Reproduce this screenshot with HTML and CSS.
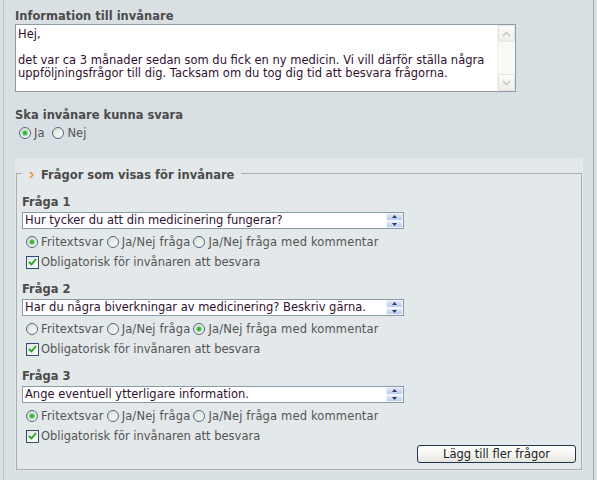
FILE: index.html
```html
<!DOCTYPE html>
<html lang="sv">
<head>
<meta charset="utf-8">
<title>Frågor</title>
<link rel="stylesheet" href="styles.css">
</head>
<body>
<div class="panel">
  <div class="field-title">Information till invånare</div>
  <div class="memo">
    <div class="memo-text">Hej,<br><br>det var ca 3 månader sedan som du fick en ny medicin. Vi vill därför ställa några<br>uppföljningsfrågor till dig. Tacksam om du tog dig tid att besvara frågorna.</div>
    <div class="vscroll">
      <span class="sbtn"><svg width="9" height="6" viewBox="0 0 9 6"><path d="M1 5 L4.5 1.5 L8 5" fill="none" stroke="#c3c6c8" stroke-width="1.4"/></svg></span>
      <span class="track"></span>
      <span class="sbtn"><svg width="9" height="6" viewBox="0 0 9 6"><path d="M1 1 L4.5 4.5 L8 1" fill="none" stroke="#c3c6c8" stroke-width="1.4"/></svg></span>
    </div>
  </div>

  <div class="field-title title-gap">Ska invånare kunna svara</div>
  <div class="choice-row answer-row">
    <span class="radio checked"></span><span class="lbl">Ja</span>
    <span class="radio"></span><span class="lbl">Nej</span>
  </div>

  <div class="group">
    <fieldset class="questions">
      <legend><svg class="chev" width="5" height="8" viewBox="0 0 5 8"><path d="M1 1 L4 4 L1 7" fill="none" stroke="#e8952c" stroke-width="1.5"/></svg>Frågor som visas för invånare</legend>

      <div class="question">
        <div class="q-title">Fråga 1</div>
        <div class="q-input">
          <span class="q-text">Hur tycker du att din medicinering fungerar?</span>
          <span class="spin"><span class="spin-btn"><svg width="5" height="3" viewBox="0 0 5 3"><path d="M0 3 L2.5 0 L5 3Z" fill="#2c3a55"/></svg></span><span class="spin-btn"><svg width="5" height="3" viewBox="0 0 5 3"><path d="M0 0 L2.5 3 L5 0Z" fill="#2c3a55"/></svg></span></span>
        </div>
        <div class="choice-row opts">
          <span class="radio checked"></span><span class="lbl">Fritextsvar</span>
          <span class="radio"></span><span class="lbl">Ja/Nej fråga</span>
          <span class="radio"></span><span class="lbl">Ja/Nej fråga med kommentar</span>
        </div>
        <div class="choice-row chk-row">
          <span class="check"><svg width="9" height="8" viewBox="0 0 9 8"><path d="M1 4 L3.5 6.5 L8 1" fill="none" stroke="#21a121" stroke-width="1.8"/></svg></span><span class="lbl">Obligatorisk för invånaren att besvara</span>
        </div>
      </div>

      <div class="question">
        <div class="q-title">Fråga 2</div>
        <div class="q-input">
          <span class="q-text">Har du några biverkningar av medicinering? Beskriv gärna.</span>
          <span class="spin"><span class="spin-btn"><svg width="5" height="3" viewBox="0 0 5 3"><path d="M0 3 L2.5 0 L5 3Z" fill="#2c3a55"/></svg></span><span class="spin-btn"><svg width="5" height="3" viewBox="0 0 5 3"><path d="M0 0 L2.5 3 L5 0Z" fill="#2c3a55"/></svg></span></span>
        </div>
        <div class="choice-row opts">
          <span class="radio"></span><span class="lbl">Fritextsvar</span>
          <span class="radio"></span><span class="lbl">Ja/Nej fråga</span>
          <span class="radio checked"></span><span class="lbl">Ja/Nej fråga med kommentar</span>
        </div>
        <div class="choice-row chk-row">
          <span class="check"><svg width="9" height="8" viewBox="0 0 9 8"><path d="M1 4 L3.5 6.5 L8 1" fill="none" stroke="#21a121" stroke-width="1.8"/></svg></span><span class="lbl">Obligatorisk för invånaren att besvara</span>
        </div>
      </div>

      <div class="question">
        <div class="q-title">Fråga 3</div>
        <div class="q-input">
          <span class="q-text">Ange eventuell ytterligare information.</span>
          <span class="spin"><span class="spin-btn"><svg width="5" height="3" viewBox="0 0 5 3"><path d="M0 3 L2.5 0 L5 3Z" fill="#2c3a55"/></svg></span><span class="spin-btn"><svg width="5" height="3" viewBox="0 0 5 3"><path d="M0 0 L2.5 3 L5 0Z" fill="#2c3a55"/></svg></span></span>
        </div>
        <div class="choice-row opts">
          <span class="radio checked"></span><span class="lbl">Fritextsvar</span>
          <span class="radio"></span><span class="lbl">Ja/Nej fråga</span>
          <span class="radio"></span><span class="lbl">Ja/Nej fråga med kommentar</span>
        </div>
        <div class="choice-row chk-row">
          <span class="check"><svg width="9" height="8" viewBox="0 0 9 8"><path d="M1 4 L3.5 6.5 L8 1" fill="none" stroke="#21a121" stroke-width="1.8"/></svg></span><span class="lbl">Obligatorisk för invånaren att besvara</span>
        </div>
      </div>

      <div class="actions">
        <button class="btn" type="button">Lägg till fler frågor</button>
      </div>
    </fieldset>
  </div>
</div>
</body>
</html>
```

FILE: styles.css
```css
html, body {
  margin: 0;
  background: #d9e0e4;
}

body {
  font-family: "DejaVu Sans", Verdana, sans-serif;
  font-size: 11.5px;
  color: #4a4a4a;
}

.panel {
  box-sizing: border-box;
  margin-left: 3px;
  width: 591px;
  height: 480px;
  border-left: 1px solid #bcc3c7;
  border-right: 1px solid #a2aaaf;
  padding: 9px 10px 0 11px;
}

.field-title {
  font-weight: bold;
  line-height: 14px;
  color: #4b4b4b;
}

.title-gap {
  margin-top: 16px;
}

.memo {
  box-sizing: border-box;
  margin-top: 1px;
  width: 501px;
  height: 68px;
  border: 1px solid #8e9ca6;
  background: #fff;
  display: flex;
}

.memo-text {
  flex: 1;
  padding: 3px 2px 0 2px;
  line-height: 13px;
  color: #2f102f;
  white-space: nowrap;
  overflow: hidden;
}

.vscroll {
  width: 17px;
  display: flex;
  flex-direction: column;
  background: #f9f9f6;
  border-left: 1px solid #f0f0ec;
}

.sbtn {
  box-sizing: border-box;
  height: 17px;
  display: flex;
  align-items: center;
  justify-content: center;
  background: linear-gradient(#fbfbf9, #eeeee9);
  border: 1px solid #e6e6e1;
  border-radius: 2px;
}

.track {
  flex: 1;
}

.choice-row {
  display: flex;
  align-items: center;
  height: 16px;
  color: #555;
}

.answer-row {
  margin-top: 3px;
  padding-left: 4px;
}

.answer-row .lbl {
  margin-right: 8px;
}

.radio {
  box-sizing: border-box;
  width: 12px;
  height: 12px;
  border: 1px solid #4f6a84;
  border-radius: 50%;
  background: linear-gradient(135deg, #dcdcd6, #fdfdfb);
  display: flex;
  align-items: center;
  justify-content: center;
  margin-right: 3px;
  flex: none;
}

.radio.checked::after {
  content: "";
  width: 4px;
  height: 4px;
  border-radius: 50%;
  background: #32b532;
  box-shadow: 0 0 1px 1px #8fd68f;
}

.lbl {
  margin-right: 3px;
  white-space: nowrap;
}

.group {
  margin-top: 17px;
  background: #e3e8ea;
  padding: 7px 1px 1px 1px;
}

.questions {
  margin: 0;
  border: 1px solid #a8afb3;
  padding: 13px 5px 6px 5px;
  min-inline-size: 0;
}

.questions legend {
  padding: 4px 7px 0 7px;
  margin-left: 0;
  line-height: 13px;
  font-weight: bold;
  color: #4b4b4b;
}

.chev {
  margin-right: 7px;
  vertical-align: 0;
}

.question + .question {
  margin-top: 12px;
}

.q-title {
  font-weight: bold;
  line-height: 14px;
  color: #4b4b4b;
}

.q-input {
  box-sizing: border-box;
  margin-top: 3px;
  width: 382px;
  height: 17px;
  border: 1px solid #8a9ba8;
  background: #fff;
  display: flex;
  align-items: stretch;
}

.q-text {
  flex: 1;
  padding-left: 2px;
  line-height: 15px;
  color: #2f102f;
  white-space: nowrap;
  overflow: hidden;
}

.spin {
  width: 17px;
  display: flex;
  flex-direction: column;
}

.spin-btn {
  flex: 1;
  display: flex;
  align-items: center;
  justify-content: center;
  background: linear-gradient(#dfe8fb, #b9cbef);
  border: 1px solid #f2f5fc;
  border-radius: 1px;
}

.opts {
  margin-top: 5px;
  padding-left: 4px;
}

.opts .lbl {
  letter-spacing: 0.15px;
}

.chk-row {
  margin-top: 4px;
  padding-left: 4px;
}

.check {
  box-sizing: border-box;
  width: 13px;
  height: 13px;
  border: 1px solid #2a4f72;
  background: linear-gradient(135deg, #e4e4de, #fff);
  display: flex;
  align-items: center;
  justify-content: center;
  margin-right: 2px;
  flex: none;
}

.actions {
  display: flex;
  justify-content: flex-end;
  margin-top: 1px;
}

.btn {
  box-sizing: border-box;
  width: 159px;
  height: 18px;
  padding: 0;
  border: 1px solid #1f3550;
  border-radius: 3px;
  background: linear-gradient(#ffffff, #f3f3ef 60%, #e4e3dc);
  font-family: "DejaVu Sans", Verdana, sans-serif;
  font-size: 11.5px;
  line-height: 14px;
  color: #222;
}
```
